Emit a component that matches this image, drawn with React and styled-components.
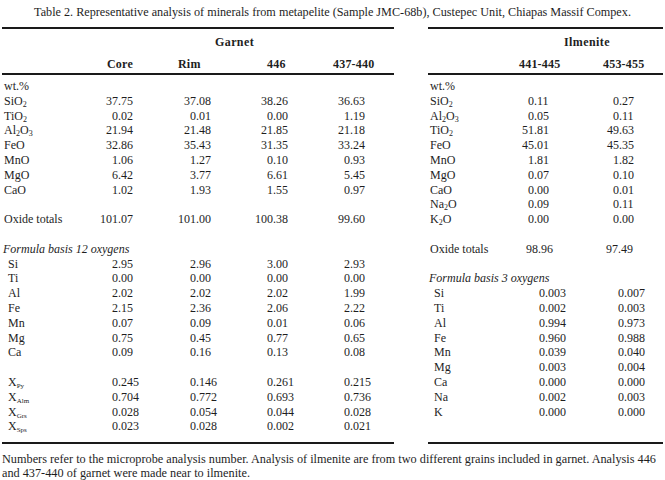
import React from 'react';
import styled, { createGlobalStyle } from 'styled-components';

const GlobalStyle = createGlobalStyle`
  html, body {
    margin: 0;
    background: #fff;
  }
  body {
    font-family: "Liberation Serif", "Times New Roman", serif;
    font-size: 12px;
    color: #1e1e1e;
  }
`;

const ROW_H = 14.8;

// garnet: Core, Rim, 446, 437-440
const garnet = {
  width: 392,
  cols: '96px 77px 77px 77px 1fr',
  group: { text: 'Garnet', x: 213 },
  heads: [
    { text: 'Core', x: 9 },
    { text: 'Rim', x: 3 },
    { text: '446', x: 15 },
    { text: '437-440', x: 4 },
  ],
  rows: [
    { label: 'wt.%' },
    { label: 'SiO2', vals: ['37.75', '37.08', '38.26', '36.63'] },
    { label: 'TiO2', vals: ['0.02', '0.01', '0.00', '1.19'] },
    { label: 'Al2O3', vals: ['21.94', '21.48', '21.85', '21.18'] },
    { label: 'FeO', vals: ['32.86', '35.43', '31.35', '33.24'] },
    { label: 'MnO', vals: ['1.06', '1.27', '0.10', '0.93'] },
    { label: 'MgO', vals: ['6.42', '3.77', '6.61', '5.45'] },
    { label: 'CaO', vals: ['1.02', '1.93', '1.55', '0.97'] },
    {},
    { label: 'Oxide totals', vals: ['101.07', '101.00', '100.38', '99.60'] },
    {},
    { label: 'Formula basis 12 oxygens', italic: true },
    { label: 'Si', el: true, vals: ['2.95', '2.96', '3.00', '2.93'] },
    { label: 'Ti', el: true, vals: ['0.00', '0.00', '0.00', '0.00'] },
    { label: 'Al', el: true, vals: ['2.02', '2.02', '2.02', '1.99'] },
    { label: 'Fe', el: true, vals: ['2.15', '2.36', '2.06', '2.22'] },
    { label: 'Mn', el: true, vals: ['0.07', '0.09', '0.01', '0.06'] },
    { label: 'Mg', el: true, vals: ['0.75', '0.45', '0.77', '0.65'] },
    { label: 'Ca', el: true, vals: ['0.09', '0.16', '0.13', '0.08'] },
    {},
    { x: 'Py', el: true, vals: ['0.245', '0.146', '0.261', '0.215'] },
    { x: 'Alm', el: true, vals: ['0.704', '0.772', '0.693', '0.736'] },
    { x: 'Grs', el: true, vals: ['0.028', '0.054', '0.044', '0.028'] },
    { x: 'Sps', el: true, vals: ['0.023', '0.028', '0.002', '0.021'] },
  ],
  dec: { ox: [20, 21, 21, 21], tot: [20, 21, 21, 21], fm: [20, 21, 21, 21] },
};

const ilmenite = {
  width: 235,
  cols: '82px 80px 1fr',
  group: { text: 'Ilmenite', x: 136 },
  heads: [
    { text: '441-445', x: 9 },
    { text: '453-455', x: 13 },
  ],
  rows: [
    { label: 'wt.%' },
    { label: 'SiO2', vals: ['0.11', '0.27'] },
    { label: 'Al2O3', vals: ['0.05', '0.11'] },
    { label: 'TiO2', vals: ['51.81', '49.63'] },
    { label: 'FeO', vals: ['45.01', '45.35'] },
    { label: 'MnO', vals: ['1.81', '1.82'] },
    { label: 'MgO', vals: ['0.07', '0.10'] },
    { label: 'CaO', vals: ['0.00', '0.01'] },
    { label: 'Na2O', vals: ['0.09', '0.11'] },
    { label: 'K2O', vals: ['0.00', '0.00'] },
    {},
    { label: 'Oxide totals', sec: 'tot', vals: ['98.96', '97.49'] },
    {},
    { label: 'Formula basis 3 oxygens', italic: true },
    { label: 'Si', el: true, sec: 'fm', vals: ['0.003', '0.007'] },
    { label: 'Ti', el: true, sec: 'fm', vals: ['0.002', '0.003'] },
    { label: 'Al', el: true, sec: 'fm', vals: ['0.994', '0.973'] },
    { label: 'Fe', el: true, sec: 'fm', vals: ['0.960', '0.988'] },
    { label: 'Mn', el: true, sec: 'fm', vals: ['0.039', '0.040'] },
    { label: 'Mg', el: true, sec: 'fm', vals: ['0.003', '0.004'] },
    { label: 'Ca', el: true, sec: 'fm', vals: ['0.000', '0.000'] },
    { label: 'Na', el: true, sec: 'fm', vals: ['0.002', '0.003'] },
    { label: 'K', el: true, sec: 'fm', vals: ['0.000', '0.000'] },
  ],
  dec: { ox: [24, 29], tot: [28, 28], fm: [35, 34] },
};

// "Al2O3" -> Al<sub>2</sub>O<sub>3</sub>
const Chem = ({ text }) =>
  text
    .split(/(\d)/)
    .map((part, i) => (/^\d$/.test(part) ? <Sub key={i}>{part}</Sub> : part));

function Num({ value, dec }) {
  const [int, frac] = value.split('.');
  return (
    <NumCell>
      <Int style={{ width: dec }}>{int}</Int>.{frac}
    </NumCell>
  );
}

function Label({ row }) {
  if (row.x) {
    return (
      <LabelCell indent>
        X<SmallSub>{row.x}</SmallSub>
      </LabelCell>
    );
  }
  if (row.italic) return <Heading>{row.label}</Heading>;
  const isChem = /\d/.test(row.label);
  return (
    <LabelCell indent={row.el}>
      {isChem ? <Chem text={row.label} /> : row.label}
    </LabelCell>
  );
}

function DataTable({ data }) {
  return (
    <Table w={data.width}>
      <Head>
        <GroupTitle x={data.group.x}>{data.group.text}</GroupTitle>
        <HeadRow cols={data.cols}>
          <span />
          {data.heads.map((h) => (
            <ColHead key={h.text} x={h.x}>
              {h.text}
            </ColHead>
          ))}
        </HeadRow>
      </Head>
      <Body>
        {data.rows.map((row, i) => {
          if (!row.label && !row.x) return <Row key={i} cols={data.cols} />;
          if (row.italic) {
            return (
              <Row key={i} cols={data.cols}>
                <Label row={row} />
              </Row>
            );
          }
          const sec = row.sec || (row.label === 'Oxide totals' ? 'tot' : row.el ? 'fm' : 'ox');
          return (
            <Row key={i} cols={data.cols}>
              <Label row={row} />
              {(row.vals || []).map((v, j) => (
                <Num key={j} value={v} dec={data.dec[sec][j]} />
              ))}
            </Row>
          );
        })}
      </Body>
    </Table>
  );
}

export default function App() {
  return (
    <Page>
      <GlobalStyle />
      <Title>
        Table 2. Representative analysis of minerals from metapelite (Sample
        JMC-68b), Custepec Unit, Chiapas Massif Compex.
      </Title>
      <Tables>
        <DataTable data={garnet} />
        <DataTable data={ilmenite} />
      </Tables>
      <Note>
        Numbers refer to the microprobe analysis number. Analysis of ilmenite
        are from two different grains included in garnet. Analysis 446
        <br />
        and 437-440 of garnet were made near to ilmenite.
      </Note>
    </Page>
  );
}

const Page = styled.div`
  width: 665px;
  padding: 4px 2px 0;
  box-sizing: border-box;
`;

const Title = styled.div`
  text-align: center;
  font-size: 12.2px;
  line-height: 16px;
  height: 23px;
  white-space: nowrap;
`;

const Tables = styled.div`
  display: flex;
  gap: 34px;
  align-items: stretch;
`;

const Table = styled.div`
  width: ${(p) => p.w}px;
  display: flex;
  flex-direction: column;
  border-top: 2px solid #1a1a1a;
  border-bottom: 2px solid #1a1a1a;
`;

const Head = styled.div`
  padding: 6px 0 2px;
  border-bottom: 2px solid #1a1a1a;
  font-weight: bold;
`;

const GroupTitle = styled.div`
  padding-left: ${(p) => p.x}px;
  line-height: 14px;
  margin-bottom: 8px;
  letter-spacing: 0.4px;
`;

const HeadRow = styled.div`
  display: grid;
  grid-template-columns: ${(p) => p.cols};
  line-height: 14px;
`;

const ColHead = styled.span`
  padding-left: ${(p) => p.x}px;
  white-space: nowrap;
  letter-spacing: 0.2px;
`;

const Body = styled.div`
  flex: 1;
  padding: 4px 0 8px;
`;

const Row = styled.div`
  display: grid;
  grid-template-columns: ${(p) => p.cols};
  height: ${ROW_H}px;
  line-height: ${ROW_H}px;
  white-space: nowrap;
`;

const LabelCell = styled.span`
  padding-left: ${(p) => (p.indent ? 6 : 2)}px;
`;

const Heading = styled.span`
  grid-column: 1 / -1;
  font-style: italic;
  padding-left: 1px;
`;

const NumCell = styled.span`
  display: block;
`;

const Int = styled.span`
  display: inline-block;
  text-align: right;
`;

const Sub = styled.sub`
  font-size: 8px;
  line-height: 0;
  vertical-align: -2px;
`;

const SmallSub = styled.sub`
  font-size: 7px;
  line-height: 0;
  vertical-align: -2px;
`;

const Note = styled.p`
  margin: 8px 0 0;
  font-size: 12.25px;
  line-height: 14px;
  white-space: nowrap;
`;
